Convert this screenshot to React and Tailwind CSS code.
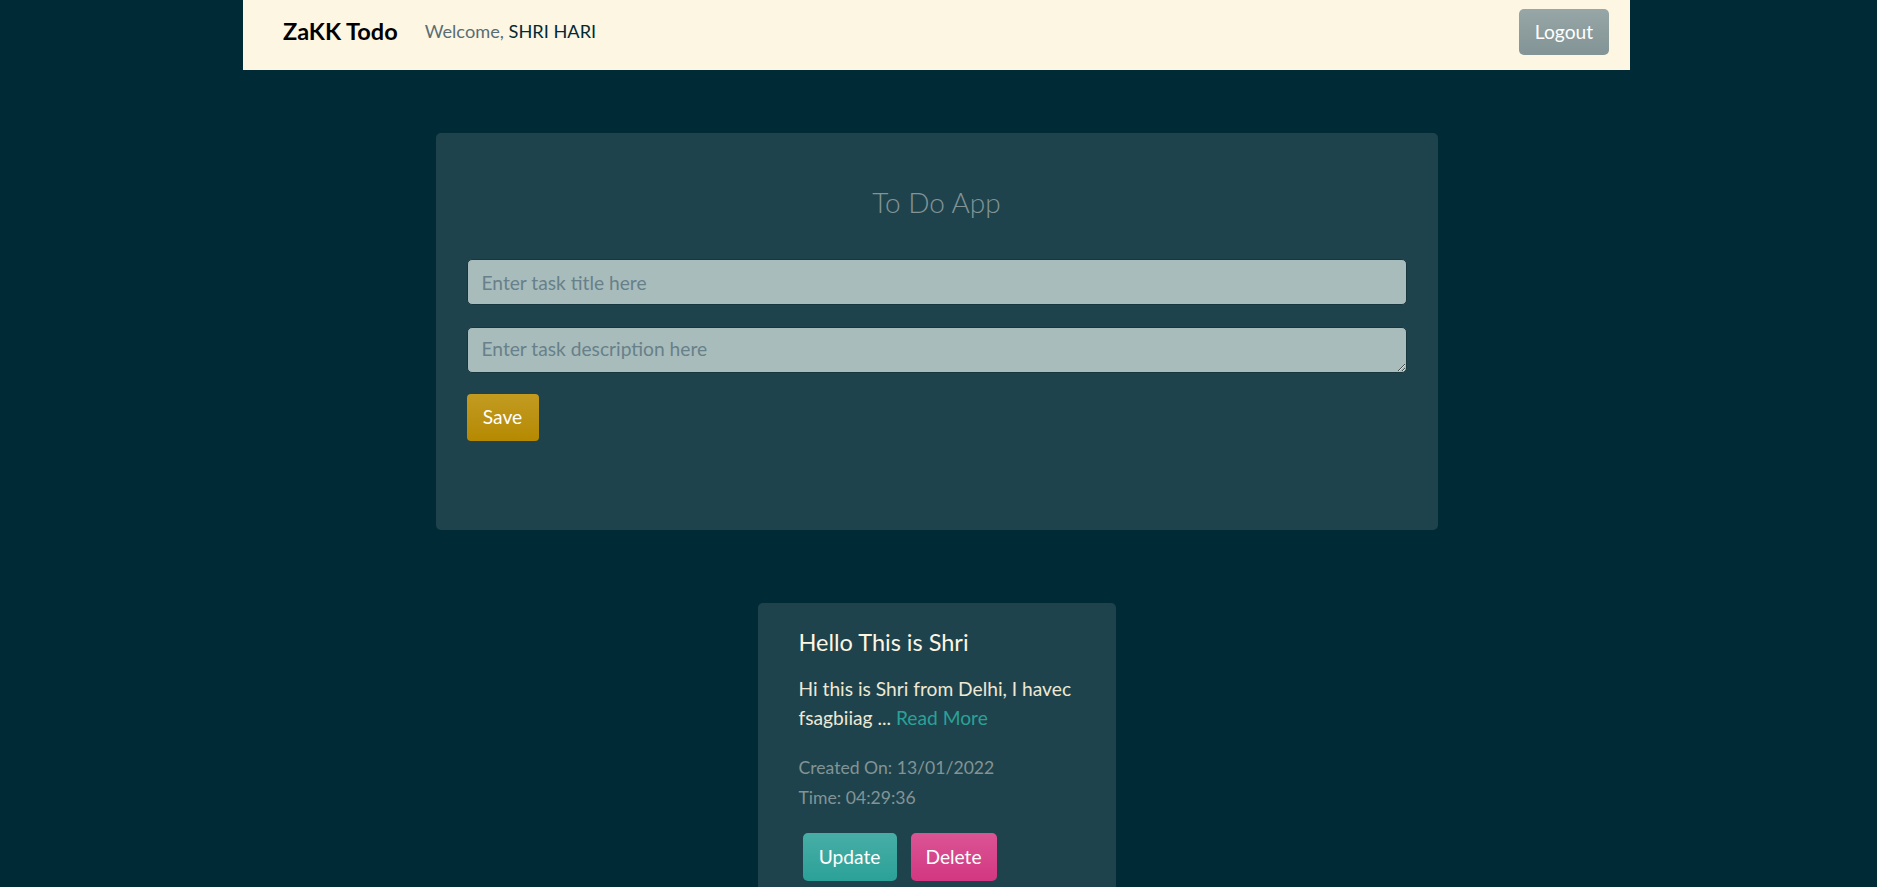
import React from 'react';

const font = { fontFamily: '"Source Sans Pro", Lato, "Liberation Sans", sans-serif' };

const Navbar = () => (
  <nav className="w-[1387px] h-[70px] mx-auto bg-[#fdf6e3] flex items-center pl-[40px] pr-[21px] pb-[6px]">
    <span className="text-[23.5px] font-bold text-black leading-none">ZaKK Todo</span>
    <span className="ml-[27px] text-[18.2px] text-[#586e75]">
      Welcome, <span className="text-[#002b36]">SHRI HARI</span>
    </span>
    <button className="ml-auto w-[90px] h-[46px] rounded-[5px] bg-gradient-to-b from-[#97a6a6] to-[#839496] text-white text-[19.2px]">
      Logout
    </button>
  </nav>
);

const TodoForm = () => (
  <div className="w-[1002px] h-[397px] mx-auto mt-[63px] rounded-[5px] bg-[#1f434c] px-[31px] pt-[49px]">
    <h3 className="text-center text-[28px] font-light leading-[40px] text-[#839496]">To Do App</h3>
    <input
      type="text"
      placeholder="Enter task title here"
      className="mt-[37px] block w-full h-[46px] rounded-[5px] border border-[#17363d] bg-[#a8bcbb] px-[14px] text-[19.2px] text-[#073642] placeholder:text-[#67808a] outline-none"
    />
    <textarea
      placeholder="Enter task description here"
      className="mt-[22px] block w-full h-[46px] rounded-[5px] border border-[#17363d] bg-[#a8bcbb] px-[14px] pt-[7px] text-[19.2px] leading-[28px] text-[#073642] placeholder:text-[#67808a] outline-none"
    />
    <button className="mt-[21px] w-[72px] h-[47px] rounded-[4px] bg-gradient-to-b from-[#c29b1f] to-[#b58900] text-white text-[19.2px]">
      Save
    </button>
  </div>
);

const TodoCard = () => (
  <div className="w-[358px] mx-auto mt-[73px] rounded-t-[5px] bg-[#1f434c] pl-[41px] pr-[38px] pt-[25px] pb-[10px]">
    <h5 className="text-[23.5px] leading-[29px] text-[#fdf6e3]">Hello This is Shri</h5>
    <p className="mt-[17px] text-[19.2px] leading-[29px] text-[#eee8d5]">
      Hi this is Shri from Delhi, I havec fsagbiiag ... <a className="text-[#2aa198]" href="#">Read More</a>
    </p>
    <p className="mt-[21px] text-[17.6px] leading-[30px] text-[#839496]">
      Created On: 13/01/2022
      <br />
      Time: 04:29:36
    </p>
    <div className="mt-[20px] ml-[4px] flex gap-[14px]">
      <button className="w-[94px] h-[48px] rounded-[5px] bg-gradient-to-b from-[#47aea6] to-[#2aa198] text-white text-[19.2px]">
        Update
      </button>
      <button className="w-[86px] h-[48px] rounded-[5px] bg-gradient-to-b from-[#da5494] to-[#d33682] text-white text-[19.2px]">
        Delete
      </button>
    </div>
  </div>
);

export default function App() {
  return (
    <div style={font} className="min-h-screen bg-[#002b36] pr-[4px] pb-[40px]">
      <Navbar />
      <TodoForm />
      <TodoCard />
    </div>
  );
}
